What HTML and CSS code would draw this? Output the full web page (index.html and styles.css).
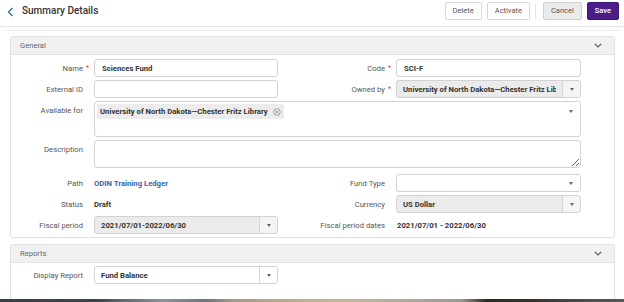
FILE: index.html
```html
<!DOCTYPE html>
<html lang="en">
<head>
<meta charset="utf-8">
<title>Summary Details</title>
<link rel="stylesheet" href="styles.css">
</head>
<body>
<div class="page">
  <header class="topbar">
    <div class="title-wrap">
      <svg class="back" width="7" height="10" viewBox="0 0 7 10"><polyline points="5.5,1 1.5,5 5.5,9" fill="none" stroke="#2f6db5" stroke-width="1.4"/></svg>
      <h1 class="title">Summary Details</h1>
    </div>
    <div class="actions">
      <button class="btn">Delete</button>
      <button class="btn">Activate</button>
      <span class="sep"></span>
      <button class="btn btn-cancel">Cancel</button>
      <button class="btn btn-save">Save</button>
    </div>
  </header>

  <main class="content">
    <section class="panel">
      <div class="panel-head">
        <span>General</span>
        <svg width="8" height="5" viewBox="0 0 8 5"><polyline points="0.8,0.8 4,4 7.2,0.8" fill="none" stroke="#555" stroke-width="1.1"/></svg>
      </div>
      <div class="form-grid">
        <div class="lbl req">Name<span class="star">*</span></div>
        <div class="field input"><span class="val">Sciences Fund</span></div>
        <div class="lbl req">Code<span class="star">*</span></div>
        <div class="field input"><span class="val">SCI-F</span></div>

        <div class="lbl">External ID</div>
        <div class="field input"></div>
        <div class="lbl req">Owned by<span class="star">*</span></div>
        <div class="field select grey divided"><span class="sel-value">University of North Dakota—Chester Fritz Library</span><span class="sel-arrow"><i class="tri"></i></span></div>

        <div class="lbl top">Available for</div>
        <div class="field multi wide">
          <span class="chip">University of North Dakota—Chester Fritz Library
            <svg width="8" height="8" viewBox="0 0 8 8"><circle cx="4" cy="4" r="3.3" fill="none" stroke="#9a9a9a" stroke-width="0.9"/><path d="M2.6 2.6L5.4 5.4M5.4 2.6L2.6 5.4" stroke="#9a9a9a" stroke-width="0.9"/></svg>
          </span>
          <span class="multi-arrow"><i class="tri"></i></span>
        </div>

        <div class="lbl top">Description</div>
        <textarea class="field area wide" aria-label="Description"></textarea>

        <div class="lbl">Path</div>
        <div class="text link">ODIN Training Ledger</div>
        <div class="lbl">Fund Type</div>
        <div class="field select"><span class="sel-value"></span><span class="sel-arrow"><i class="tri"></i></span></div>

        <div class="lbl">Status</div>
        <div class="text">Draft</div>
        <div class="lbl">Currency</div>
        <div class="field select grey divided"><span class="sel-value">US Dollar</span><span class="sel-arrow"><i class="tri"></i></span></div>

        <div class="lbl">Fiscal period</div>
        <div class="field select grey divided"><span class="sel-value">2021/07/01-2022/06/30</span><span class="sel-arrow"><i class="tri"></i></span></div>
        <div class="lbl">Fiscal period dates</div>
        <div class="text dates">2021/07/01 - 2022/06/30</div>
      </div>
    </section>

    <section class="panel reports">
      <div class="panel-head">
        <span>Reports</span>
        <svg width="8" height="5" viewBox="0 0 8 5"><polyline points="0.8,0.8 4,4 7.2,0.8" fill="none" stroke="#555" stroke-width="1.1"/></svg>
      </div>
      <div class="form-grid reports-grid">
        <div class="lbl">Display Report</div>
        <div class="field select divided"><span class="sel-value">Fund Balance</span><span class="sel-arrow"><i class="tri"></i></span></div>
      </div>
    </section>
  </main>
  <div class="photo-strip"></div>
</div>
</body>
</html>
```
FILE: styles.css
```css
* { box-sizing: border-box; }
html, body { margin: 0; padding: 0; }
body {
  width: 624px;
  height: 302px;
  overflow: hidden;
  background: #fff;
  font-family: Roboto, "Liberation Sans", sans-serif;
  color: #333;
}
.page { width: 624px; height: 302px; overflow: hidden; display: flex; flex-direction: column; }

.topbar {
  height: 27px;
  flex: none;
  border-bottom: 1px solid #e6e6e6;
  display: flex;
  justify-content: space-between;
  align-items: flex-start;
  padding: 2px 5px 0 7px;
}
.title-wrap { display: flex; align-items: center; height: 18px; gap: 8px; }
.back { display: block; margin-top: 1px; }
.title { margin: 0; font-size: 10px; font-weight: 500; color: #333; line-height: 18px; }

.actions { display: flex; align-items: center; }
.btn {
  height: 18px;
  padding: 0 7px;
  border: 1px solid #dadada;
  border-radius: 2px;
  background: #fff;
  color: #555;
  font-family: inherit;
  font-size: 7.5px;
  line-height: 16px;
  margin-left: 5px;
}
.btn:first-child { margin-left: 0; }
.sep { width: 1px; height: 15px; background: #e6e6e6; margin: 0 0 0 5px; }
.btn-cancel { background: #ebebeb; border-color: #cfcfcf; margin-left: 7px; }
.btn-save { background: #4b1c8a; border-color: #3e1475; color: #fff; font-weight: 500; }

.content {
  flex: none;
  margin: 3px 4px 0;
  border-top: 1px solid #efefef;
  padding: 5px 5px 0 6px;
}

.panel {
  border: 1px solid #e0e0e0;
  border-radius: 3px;
  background: #fff;
}
.reports { margin-top: 6px; border-bottom: none; border-radius: 3px 3px 0 0; }
.panel-head {
  height: 18px;
  background: #f1f1f1;
  border-bottom: 1px solid #e4e4e4;
  display: flex;
  align-items: center;
  justify-content: space-between;
  padding: 0 12px 0 9px;
  font-size: 7.6px;
  color: #666;
  border-radius: 3px 3px 0 0;
}
.panel-head svg { display: block; }

.form-grid {
  display: grid;
  grid-template-columns: 83px 184px 118px 185px;
  row-gap: 3px;
  padding: 4px 0 3px;
  font-size: 7.7px;
}
.lbl {
  height: 18px;
  display: flex;
  align-items: center;
  justify-content: flex-end;
  padding-right: 11px;
  color: #555;
  white-space: nowrap;
}
.lbl.req { padding-right: 5px; }
.star { color: #e0393e; margin-left: 3px; font-size: 7px; }
.lbl.top { align-self: start; }

.field {
  height: 18px;
  border: 1px solid #d2d2d2;
  border-radius: 3px;
  background: #fff;
}
.input { display: flex; align-items: center; padding: 0 7px; }
.val { font-weight: 700; color: #333; }

.select { display: flex; align-items: stretch; overflow: hidden; }
.sel-value {
  flex: 1;
  min-width: 0;
  overflow: hidden;
  white-space: nowrap;
  font-weight: 700;
  color: #333;
  display: flex;
  align-items: center;
  margin: 0 6px 0 6px;
}
.sel-arrow {
  width: 18px;
  flex: none;
  display: flex;
  align-items: center;
  justify-content: center;
}
.divided .sel-arrow { border-left: 1px solid #d6d6d6; background: #f7f7f7; }
.grey { background: #ebebeb; }
.grey .sel-arrow { background: #f4f4f4; }
.select:not(.grey).divided .sel-arrow { background: #fff; }
.tri {
  display: block;
  width: 0;
  height: 0;
  border-left: 2.5px solid transparent;
  border-right: 2.5px solid transparent;
  border-top: 3px solid #666;
}

.wide { grid-column: 2 / 5; }
.multi {
  height: 36px;
  display: flex;
  justify-content: space-between;
  align-items: flex-start;
  padding: 2px 0 0 2px;
}
.chip {
  height: 15px;
  display: inline-flex;
  align-items: center;
  gap: 5px;
  padding: 0 3px;
  background: #ececec;
  border-radius: 2px;
  font-weight: 700;
  color: #333;
  white-space: nowrap;
}
.chip svg { display: block; }
.multi-arrow { width: 18px; height: 15px; display: flex; align-items: center; justify-content: center; }

.area {
  height: 28px;
  resize: vertical;
  font-family: inherit;
  margin: 0 0 3px;
  display: block;
  width: 100%;
}

.text {
  height: 18px;
  display: flex;
  align-items: center;
  font-weight: 700;
  color: #333;
  white-space: nowrap;
}
.link { color: #3566a9; }
.dates { padding-left: 1px; }

.reports-grid { padding: 3px 0 15px; }

.photo-strip {
  flex: 1;
  min-height: 3px;
  background: linear-gradient(90deg,
    #3b4048 0%, #3e444c 16%, #5d636b 19%, #8d9399 26%, #6f757b 33%,
    #a3998a 37%, #bba98c 45%, #c6b699 55%, #b3ab9c 64%, #9c9890 74%,
    #2c2824 78%, #35312d 85%, #4a4949 92%, #585858 100%);
}
```
